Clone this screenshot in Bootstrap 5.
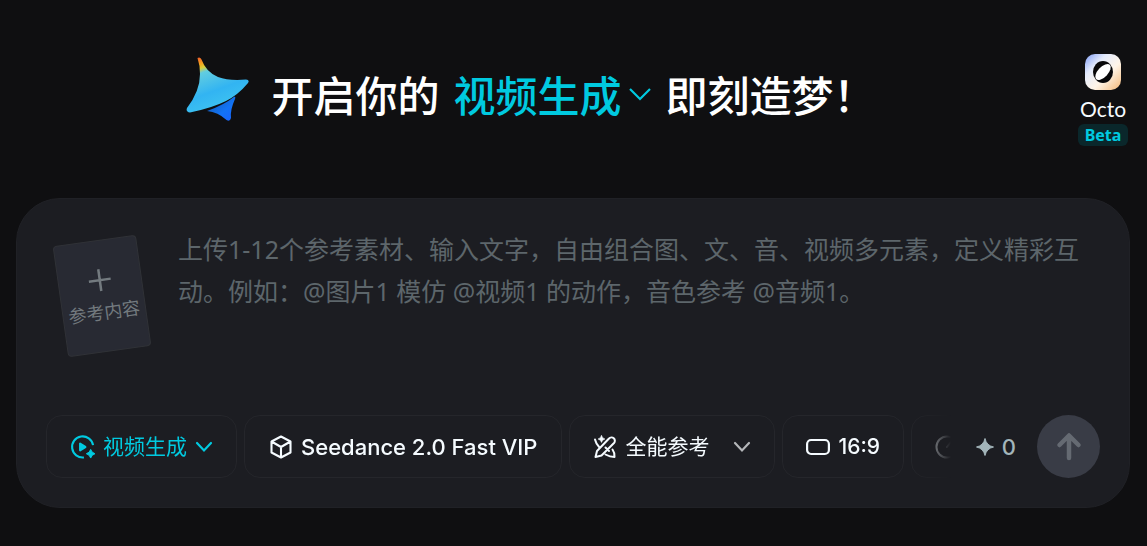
<!DOCTYPE html>
<html lang="zh-CN" data-bs-theme="dark">
<head>
<meta charset="utf-8">
<meta name="viewport" content="width=device-width, initial-scale=1">
<title>视频生成</title>
<link href="https://cdn.jsdelivr.net/npm/bootstrap@5.3.0/dist/css/bootstrap.min.css" rel="stylesheet">
<style>
  :root { --cyan: #00cae0; --ink: #f5fbff; --soft: #5d666b; --panel: #1c1d22; }
  body { background: #0f0f11; color: var(--ink); font-family: "Noto Sans", "Noto Sans CJK SC", sans-serif; }
  svg { display: block; flex: none; }
  .hero { height: 198px; padding: 0 19px 0 16px; }
  .hero-title { font-size: 42px; line-height: 76px; font-weight: 500; padding: 56px 32px 0 0; gap: 14px; font-family: "Noto Sans CJK SC", sans-serif; }
  .title-logo { margin-right: 7px; }
  .title-pick { color: var(--cyan); gap: 6px; font-weight: 500; }
  .octo { margin-top: 54px; width: 50px; color: var(--ink); font: 400 21px/24px Lato, sans-serif; }
  .beta { background: #0a272b; color: var(--cyan); font: 700 16px/22px "Noto Sans", sans-serif; border-radius: 6px; width: 50px; margin-top: 5px; }
  .composer { background: var(--panel); border: 1px solid #202126; border-radius: 44px; margin: 0 17px 0 16px; padding: 29px; }
  .upload { width: 84px; height: 112px; margin: 12px 34px 0 14px; background: #282a33; border: 1px solid #303237; border-radius: 4px; color: #737a7f; font-size: 18px; line-height: 24px; transform: rotate(-8deg); gap: 8px; }
  .prompt { background: none; border: 0; outline: 0; resize: none; padding: 0; height: 168px; margin-bottom: 19px; color: var(--ink); font-size: 25px; line-height: 42px; overflow: hidden; }
  .prompt::placeholder { color: var(--soft); opacity: 1; }
  .chips { gap: 7px; -webkit-mask-image: linear-gradient(to left, transparent 0, #000 44px); mask-image: linear-gradient(to left, transparent 0, #000 44px); }
  .chip { height: 63px; padding: 0 23px; background: none; border: 1px solid #25262b; border-radius: 16px; color: var(--ink); font: 400 21px/30px Inter, "Noto Sans CJK SC", sans-serif; gap: 8px; white-space: nowrap; flex: none; }
  .chip-mode { color: var(--cyan); }
  .latin { font-weight: 500; }
  .model { font-size: 22px; padding: 0 24px; }
  .credits { color: #a3b5ba; font: 500 22px/30px Inter, sans-serif; gap: 8px; margin: 0 21px 0 25px; }
  .send { width: 63px; height: 63px; background: #393c46; border: 0; color: #656a72; }
</style>
</head>
<body>
<header class="hero d-flex align-items-start">
  <h1 class="hero-title d-flex flex-grow-1 justify-content-center align-items-center m-0 text-nowrap">
    <svg class="title-logo align-self-start" width="64" height="66" viewBox="14 11 64 66" aria-hidden="true">
      <defs>
        <linearGradient id="star" gradientUnits="userSpaceOnUse" x1="26" y1="12" x2="46" y2="66">
          <stop offset="0" stop-color="#f0582c"/><stop offset=".13" stop-color="#f5a51d"/><stop offset=".2" stop-color="#d9cf3a"/><stop offset=".28" stop-color="#62cde0"/><stop offset=".65" stop-color="#32b4f2"/><stop offset="1" stop-color="#3fc4f0"/>
        </linearGradient>
        <linearGradient id="tail" x1="0" y1="0" x2="1" y2="1"><stop offset="0" stop-color="#1457a8"/><stop offset=".6" stop-color="#1273f5"/><stop offset="1" stop-color="#1b62ff"/></linearGradient>
      </defs>
      <path fill="url(#star)" d="M25.500 13 Q28 11.500 29.500 14.500 Q34 27 46 32 Q57 36 74 34.500 Q78 35 76 38 Q66 50 54 56 Q40 63 18 67.500 Q13.500 67 15 63 Q28 46 28 29 Q28 20 25.500 13Z"/>
      <path fill="url(#tail)" d="M35 66 Q52 60 62.500 51.500 Q64 52 63 54 Q58 65 59 73 Q58 77 54.500 75 Q46 67 35 66Z"/>
    </svg>
    <span>开启你的</span>
    <a href="#" class="title-pick d-flex align-items-center text-decoration-none">视频生成
      <svg width="24" height="16" viewBox="0 0 24 16" fill="none" stroke="currentColor" stroke-width="2.200"><path d="M2 3l10 10L22 3"/></svg>
    </a>
    <span>即刻造梦！</span>
  </h1>
  <a href="#" class="octo d-flex flex-column align-items-center text-decoration-none">
    <svg width="36" height="36" viewBox="0 0 36 36" class="mb-2" aria-hidden="true">
      <defs><linearGradient id="tile" x1="0" y1="0" x2="1" y2="1"><stop offset="0" stop-color="#7f9cf5"/><stop offset=".3" stop-color="#e4ebfc"/><stop offset=".6" stop-color="#fff5e8"/><stop offset="1" stop-color="#f5b877"/></linearGradient></defs>
      <rect width="36" height="36" rx="10" fill="url(#tile)"/>
      <ellipse cx="18" cy="18" rx="10" ry="11" fill="#08080a"/>
      <ellipse cx="18" cy="18" rx="10" ry="5" fill="#fff" transform="rotate(-47 18 18)"/>
    </svg>
    <span class="lh-1">Octo</span>
    <span class="beta text-center">Beta</span>
  </a>
</header>

<main class="composer">
  <div class="d-flex align-items-start">
    <button type="button" class="upload d-flex flex-column align-items-center justify-content-center flex-shrink-0 p-0">
      <svg width="24" height="24" viewBox="0 0 24 24" stroke="currentColor" stroke-width="2.500"><path d="M12 1v22M1 12h22"/></svg>
      <span class="text-nowrap">参考内容</span>
    </button>
    <textarea class="prompt flex-grow-1" aria-label="提示词" placeholder="上传1-12个参考素材、输入文字，自由组合图、文、音、视频多元素，定义精彩互动。例如：@图片1 模仿 @视频1 的动作，音色参考 @音频1。"></textarea>
  </div>
  <div class="d-flex align-items-center">
    <div class="chips d-flex flex-grow-1 overflow-hidden" style="min-width:0">
      <button type="button" class="chip chip-mode d-flex align-items-center">
        <svg width="25" height="26" viewBox="0 0 26 26" fill="none" stroke="currentColor" stroke-width="2.200"><path d="M24 11A11 11 0 1 0 14.500 23.900"/><path d="M10.500 9.500v7l5.500-3.500z" fill="currentColor" stroke-linejoin="round"/><path d="M21.500 15.500q1 3.500 4.500 4.500q-3.500 1-4.500 4.500q-1-3.500-4.500-4.500q3.500-1 4.500-4.500z" fill="currentColor" stroke-width="1" stroke-linejoin="round"/></svg>
        <span>视频生成</span>
        <svg width="18" height="12" viewBox="0 0 18 12" fill="none" stroke="currentColor" stroke-width="2.200" stroke-linecap="round"><path d="M2 2l7 7.500L16 2"/></svg>
      </button>
      <button type="button" class="chip latin model d-flex align-items-center">
        <svg width="24" height="24" viewBox="0 0 24 24" fill="none" stroke="currentColor" stroke-width="2.100" stroke-linejoin="round"><path d="M12 1.500l9.500 5v11L12 22.500l-9.500-5v-11zM2.500 6.500L12 12l9.500-5.500M12 12v10.500"/></svg>
        <span>Seedance 2.0 Fast VIP</span>
      </button>
      <button type="button" class="chip d-flex align-items-center">
        <svg width="24" height="24" viewBox="0 0 24 24" fill="none" stroke="currentColor" stroke-width="2" stroke-linecap="round" stroke-linejoin="round"><path d="M2.500 22L4 16L16 3.500A3.300 3.300 0 0 1 21 8L8.500 20.500ZM2 4.500Q3 9 6.500 12.500M12.500 12.500l3.500 3.500M19.500 14.500Q22 18 21.500 22Q17 22 12.500 19.500"/><path d="M8.500 .5q.7 2.800 3.500 3.500q-2.800.7-3.500 3.500q-.7-2.800-3.500-3.500q2.800-.7 3.500-3.500z" fill="currentColor" stroke-width=".5"/></svg>
        <span>全能参考</span>
        <svg class="ms-3" width="18" height="12" viewBox="0 0 18 12" fill="none" stroke="#b4b6b9" stroke-width="2.200" stroke-linecap="round"><path d="M2 2l7 7.500L16 2"/></svg>
      </button>
      <button type="button" class="chip latin d-flex align-items-center">
        <svg width="24" height="18" viewBox="0 0 24 18" fill="none" stroke="currentColor" stroke-width="2.200"><rect x="1.100" y="2" width="21.800" height="14" rx="4"/></svg>
        <span>16:9</span>
      </button>
      <button type="button" class="chip latin d-flex align-items-center" aria-label="时长">
        <svg width="24" height="24" viewBox="0 0 24 24" fill="none" stroke="currentColor" stroke-width="2" stroke-linecap="round"><circle cx="12" cy="12" r="10.500"/><path d="M12 12l4-5"/></svg>
      </button>
    </div>
    <div class="credits d-flex align-items-center">
      <svg width="18" height="18" viewBox="0 0 18 18" fill="currentColor"><path d="M9 .5Q10.500 7.500 17.500 9Q10.500 10.500 9 17.500Q7.500 10.500 .5 9Q7.500 7.500 9 .5z" stroke="currentColor" stroke-linejoin="round"/></svg>
      <span>0</span>
    </div>
    <button type="button" class="send rounded-circle d-flex align-items-center justify-content-center flex-shrink-0 p-0" aria-label="发送">
      <svg width="26" height="30" viewBox="0 0 26 30" fill="none" stroke="currentColor" stroke-width="4.500" stroke-linecap="round" stroke-linejoin="round"><path d="M13 26V4M3.500 13L13 3.500L22.500 13"/></svg>
    </button>
  </div>
</main>
<script src="https://cdn.jsdelivr.net/npm/bootstrap@5.3.0/dist/js/bootstrap.bundle.min.js"></script>
</body>
</html>
